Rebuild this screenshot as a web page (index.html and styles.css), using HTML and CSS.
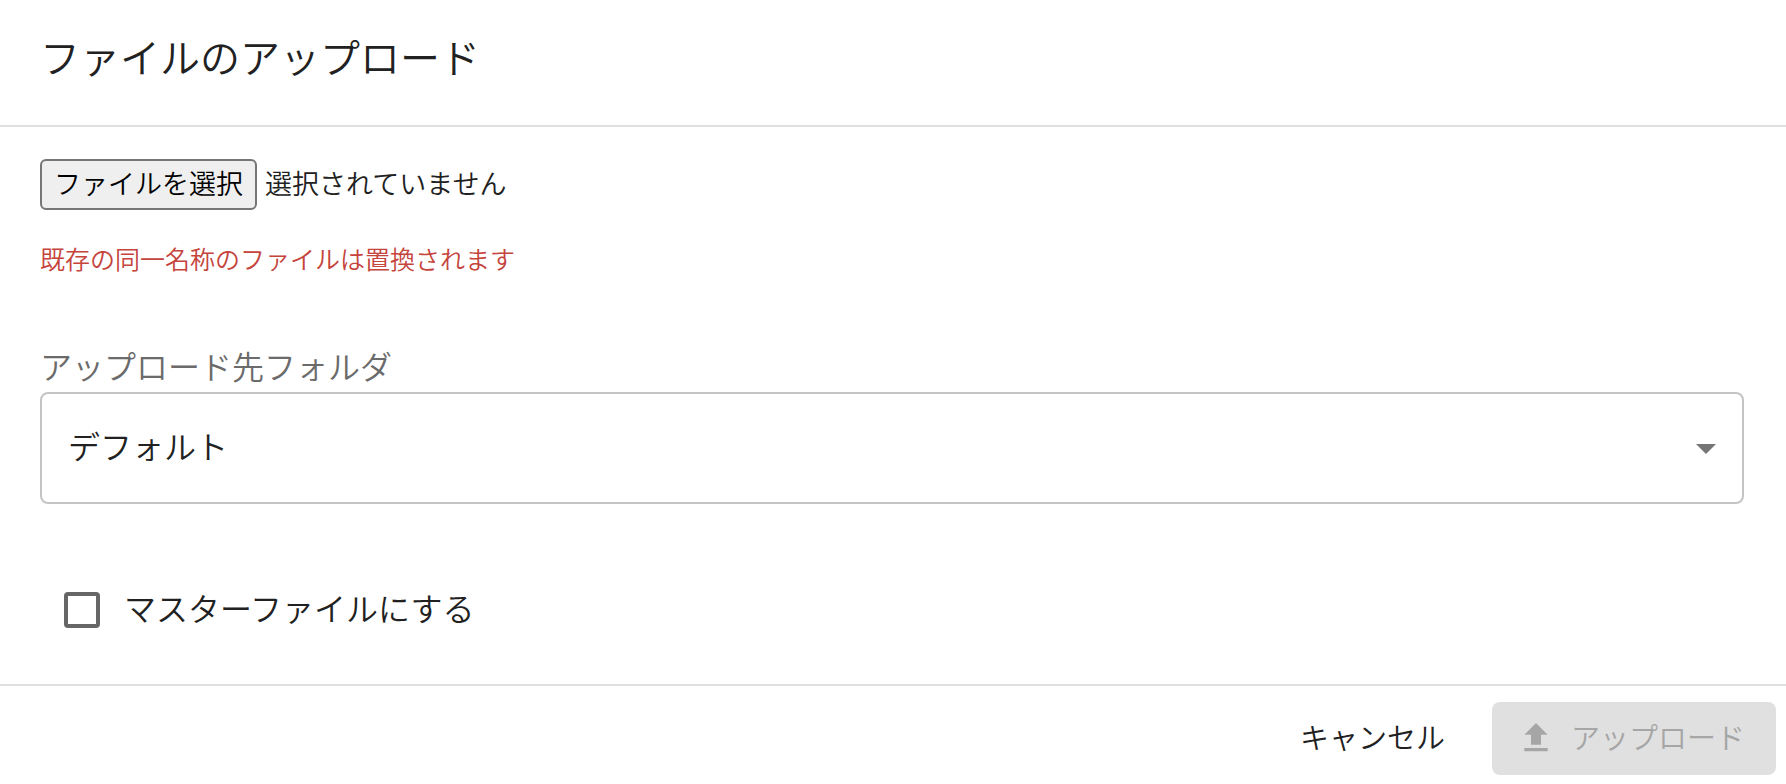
FILE: index.html
```html
<!DOCTYPE html>
<html lang="ja">
<head>
<meta charset="utf-8">
<title>ファイルのアップロード</title>
<link rel="stylesheet" href="styles.css">
</head>
<body>
<form class="dialog">
  <header class="dialog-header">
    <h1 class="dialog-title">ファイルのアップロード</h1>
  </header>
  <main class="dialog-body">
    <label class="file-picker">
      <input class="file-input" type="file">
      <span class="file-button">ファイルを選択</span>
      <span class="file-status">選択されていません</span>
    </label>
    <p class="warning">既存の同一名称のファイルは置換されます</p>
    <label class="field-label" for="folder">アップロード先フォルダ</label>
    <div class="select-field">
      <select class="select" id="folder">
        <option>デフォルト</option>
      </select>
      <svg class="select-arrow" viewBox="0 0 20 10" aria-hidden="true"><path d="M0 0h20L10 10z"/></svg>
    </div>
    <div class="check-row">
      <input class="checkbox" type="checkbox" id="master">
      <label class="check-label" for="master">マスターファイルにする</label>
    </div>
  </main>
  <footer class="dialog-footer">
    <button class="button" type="button">キャンセル</button>
    <button class="button button-primary" type="submit" disabled>
      <svg class="button-icon" viewBox="0 0 24 24" aria-hidden="true"><path d="M9 16h6v-6h4l-7-7-7 7h4zm-4 2h14v2H5z"/></svg>
      アップロード
    </button>
  </footer>
</form>
</body>
</html>
```
FILE: styles.css
```css
* {
  box-sizing: border-box;
}

body {
  margin: 0;
  background: #fff;
  color: #212121;
  font-family: "Noto Sans CJK JP", sans-serif;
  font-weight: 350;
  font-size: 32px;
  line-height: 40px;
}

.dialog-header {
  padding: 24px 40px 37px;
  border-bottom: 2px solid #e0e0e0;
}

.dialog-title {
  margin: 0;
  font-size: 40px;
  font-weight: inherit;
  line-height: 64px;
}

.dialog-body {
  padding: 32px 42px 51px 40px;
}

.file-picker {
  position: relative;
  display: flex;
  align-items: center;
  gap: 8px;
  width: fit-content;
  font-size: 27px;
}

.file-input {
  position: absolute;
  inset: 0;
  width: 100%;
  opacity: 0;
}

.file-button {
  padding: 2px 12px 5px;
  border: 2px solid #767676;
  border-radius: 6px;
  background: #efefef;
  color: #000;
}

.file-status {
  padding-bottom: 3px;
}

.warning {
  margin: 28px 0 67px;
  color: #c5443c;
  font-size: 25px;
}

.field-label {
  display: block;
  margin-bottom: 7px;
  color: #6b6b6b;
}

.select-field {
  display: grid;
  align-items: center;
}

.select {
  grid-area: 1 / 1;
  width: 100%;
  height: 112px;
  padding: 0 64px 6px 26px;
  border: 2px solid #c4c4c4;
  border-radius: 8px;
  appearance: none;
  background: transparent;
  color: inherit;
  font: inherit;
}

.select-arrow {
  grid-area: 1 / 1;
  justify-self: end;
  width: 20px;
  height: 10px;
  margin: 2px 28px 0 0;
  fill: #757575;
  pointer-events: none;
}

.check-row {
  display: flex;
  align-items: center;
  gap: 24px;
  margin-top: 83px;
  padding-left: 24px;
}

.check-label {
  padding-bottom: 6px;
}

.checkbox {
  width: 36px;
  height: 36px;
  margin: 0;
  border: 4px solid #666;
  border-radius: 4px;
  appearance: none;
}

.checkbox:checked {
  background: #666;
}

.dialog-footer {
  display: flex;
  justify-content: flex-end;
  gap: 16px;
  padding: 16px 10px 9px;
  border-top: 2px solid #e0e0e0;
}

.button {
  display: flex;
  align-items: flex-start;
  gap: 15px;
  padding: 16px 31px 17px;
  border: 0;
  border-radius: 8px;
  background: transparent;
  color: inherit;
  font: inherit;
  font-size: 29px;
  line-height: 36px;
}

.button-primary {
  padding-left: 24px;
  background: #e0e0e0;
  color: #a6a6a6;
}

.button-icon {
  width: 40px;
  height: 40px;
  fill: currentColor;
}
```
